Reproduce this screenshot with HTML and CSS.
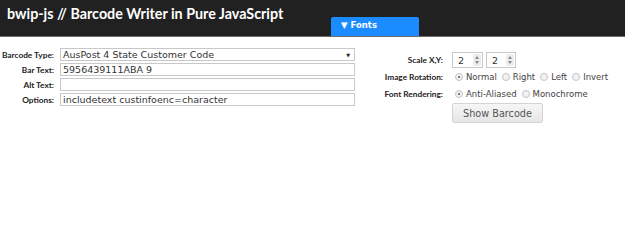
FILE: index.html
```html
<!DOCTYPE html>
<html lang="en">
<head>
    <meta charset="UTF-8">
    <title>bwip-js // Barcode Writer in Pure JavaScript</title>
    <link rel="stylesheet" href="styles.css">
</head>
<body>
    <!-- Header -->
    <div class="header">
        <h1 class="title">bwip-js // Barcode Writer in Pure JavaScript</h1>
        <div class="fonts-tab">&#9660; Fonts</div>
    </div>

    <!-- Form -->
    <div class="form">
        <div class="form-left">
            <label class="label">Barcode Type:</label>
            <div class="select">
                <span>AusPost 4 State Customer Code</span>
                <span class="select-arrow">&#9660;</span>
            </div>

            <label class="label">Bar Text:</label>
            <input class="text-input" type="text" value="5956439111ABA 9">

            <label class="label">Alt Text:</label>
            <input class="text-input" type="text" value="">

            <label class="label">Options:</label>
            <input class="text-input" type="text" value="includetext custinfoenc=character">
        </div>

        <div class="form-right">
            <label class="label">Scale X,Y:</label>
            <div class="controls">
                <div class="spinner">
                    <span>2</span>
                    <span class="spin-btn"><i class="up"></i><i class="down"></i></span>
                </div>
                <div class="spinner spinner-small">
                    <span>2</span>
                    <span class="spin-btn"><i class="up"></i><i class="down"></i></span>
                </div>
            </div>

            <label class="label">Image Rotation:</label>
            <div class="controls radios">
                <span class="radio checked"></span><span class="radio-text">Normal</span>
                <span class="radio"></span><span class="radio-text">Right</span>
                <span class="radio"></span><span class="radio-text">Left</span>
                <span class="radio"></span><span class="radio-text">Invert</span>
            </div>

            <label class="label">Font Rendering:</label>
            <div class="controls radios">
                <span class="radio checked"></span><span class="radio-text">Anti-Aliased</span>
                <span class="radio"></span><span class="radio-text">Monochrome</span>
            </div>

            <span></span>
            <div class="controls">
                <button class="show-btn">Show Barcode</button>
            </div>
        </div>
    </div>
</body>
</html>
```

FILE: styles.css
```css
* {
    margin: 0;
    padding: 0;
    box-sizing: border-box;
}

body {
    font-family: 'DejaVu Sans', Verdana, sans-serif;
    background: #ffffff;
    color: #333333;
}

/* Header */
.header {
    height: 37px;
    background: #212121;
    border-bottom: 1px solid #6a6a6a;
    display: grid;
    grid-template-columns: 331px 88px;
}

.title {
    font-family: 'Lato', sans-serif;
    font-size: 14.3px;
    font-weight: 700;
    color: #ffffff;
    padding: 5px 0 0 7px;
}

.fonts-tab {
    align-self: end;
    height: 19px;
    background: #1a8cff;
    border-radius: 2px 2px 0 0;
    color: #ffffff;
    font-size: 8.5px;
    font-weight: 700;
    padding: 3px 0 0 10px;
}

/* Form */
.form {
    display: flex;
    align-items: flex-start;
}

.label {
    font-family: 'Lato', sans-serif;
    font-size: 8.3px;
    font-weight: 700;
    color: #222222;
    text-align: right;
    align-self: center;
}

.form-left {
    margin-top: 11px;
    display: grid;
    grid-template-columns: 54px 295px;
    grid-auto-rows: 13px;
    column-gap: 6px;
    row-gap: 2px;
}

.select,
.text-input {
    height: 13px;
    border: 1px solid #c8c8c8;
    font-family: 'DejaVu Sans', sans-serif;
    font-size: 9.5px;
    color: #333333;
    padding: 0 2px;
    background: #ffffff;
}

.select {
    display: flex;
    justify-content: space-between;
    align-items: center;
}

.select-arrow {
    font-size: 5px;
    color: #222222;
    padding-right: 2px;
}

.text-input {
    width: 100%;
    outline: none;
}

.form-right {
    margin: 15px 0 0 16px;
    display: grid;
    grid-template-columns: 72px auto;
    grid-template-rows: 16px 16px 16px 20px;
    column-gap: 9px;
    row-gap: 1px;
}

.controls {
    display: flex;
    align-items: center;
    gap: 3px;
}

/* Number spinners */
.spinner {
    width: 31px;
    height: 16px;
    border: 1px solid #c8c8c8;
    display: flex;
    align-items: center;
    justify-content: space-between;
    font-size: 9.5px;
    padding: 0 1px 0 5px;
}

.spinner-small {
    width: 30px;
}

.spin-btn {
    width: 8px;
    height: 12px;
    border-radius: 2px;
    background: #ececec;
    display: flex;
    flex-direction: column;
    align-items: center;
    justify-content: center;
    gap: 2px;
}

.spin-btn i {
    width: 0;
    height: 0;
    border-left: 2px solid transparent;
    border-right: 2px solid transparent;
}

.spin-btn .up {
    border-bottom: 3px solid #8a8a8a;
}

.spin-btn .down {
    border-top: 3px solid #8a8a8a;
}

/* Radios */
.radios {
    gap: 0;
    padding-left: 3px;
}

.radio {
    width: 8px;
    height: 8px;
    border-radius: 50%;
    border: 1px solid #c4c4c4;
    background: #f2f2f2;
    position: relative;
    margin-right: 3px;
}

.radio.checked::after {
    content: '';
    position: absolute;
    top: 2px;
    left: 2px;
    width: 2px;
    height: 2px;
    border-radius: 50%;
    background: #555555;
}

.radio-text {
    font-size: 8.5px;
    color: #444444;
    margin-right: 5px;
}

/* Button */
.show-btn {
    width: 91px;
    height: 20px;
    border: 1px solid #d4d4d4;
    border-radius: 2px;
    background: linear-gradient(#f6f6f6, #e6e6e6);
    font-family: 'DejaVu Sans', sans-serif;
    font-size: 9.7px;
    color: #555555;
    cursor: pointer;
}
```
